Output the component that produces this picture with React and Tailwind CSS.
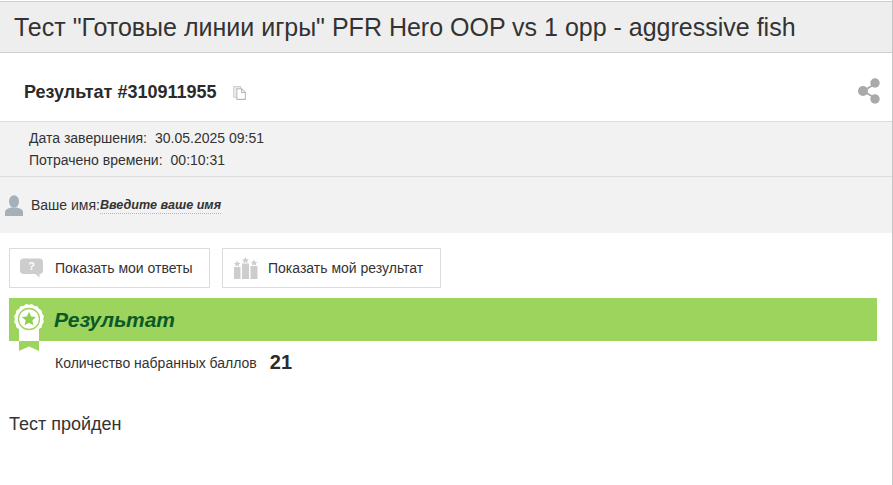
const font = { fontFamily: '"Liberation Sans", Arial, sans-serif' };

function CopyIcon() {
  return (
    <svg width="15" height="16" viewBox="0 0 14 15" className="ml-[15px] mt-[1px] shrink-0">
      <path d="M1.5 1.5H8V11.5H1.5Z" fill="#eeeeee" stroke="#d9d0c8" />
      <path d="M4.5 3.5H9L12.5 7V13.5H4.5Z" fill="#fff" stroke="#b9b9b9" />
      <path d="M9 3.5V7H12.5" fill="none" stroke="#b9b9b9" />
    </svg>
  );
}

function ShareIcon() {
  return (
    <svg width="24" height="28" viewBox="0 0 24 28" className="block">
      <path d="M6 14L18 7M6 14L18 21" stroke="#a9a9a9" strokeWidth="2" />
      <circle cx="6" cy="14" r="5" fill="#a9a9a9" />
      <circle cx="18" cy="6" r="4.7" fill="#a9a9a9" />
      <circle cx="18" cy="22" r="4.7" fill="#a9a9a9" />
    </svg>
  );
}

function UserIcon() {
  return (
    <svg width="18" height="22" viewBox="0 0 18 22" className="block shrink-0">
      <ellipse cx="9" cy="6.5" rx="5" ry="6.2" fill="#a5b0b9" />
      <path d="M0 21V17.5C0 14.5 3 13.5 6 12.5H12C15 13.5 18 14.5 18 17.5V21Z" fill="#a5b0b9" />
    </svg>
  );
}

function QuestionIcon() {
  return (
    <svg width="24" height="20" viewBox="0 0 24 20" className="block shrink-0">
      <path d="M4 0.5H19C22 0.5 23 2 23 4V12C23 14.5 22 16 19.5 16V19.5L15.5 16H4C1 16 0 14.5 0 12V4C0 2 1 0.5 4 0.5Z" fill="#cdcdcd" />
      <text x="11.5" y="12" textAnchor="middle" fontSize="11" fontWeight="700" fill="#fff" fontFamily="Liberation Sans">?</text>
    </svg>
  );
}

function PodiumIcon() {
  return (
    <svg width="24" height="22" viewBox="0 0 24 22" className="block shrink-0">
      <rect x="0" y="10" width="6.5" height="12" fill="#cdcdcd" />
      <rect x="8" y="6.5" width="7" height="15.5" fill="#cdcdcd" />
      <rect x="16.5" y="9" width="7" height="13" fill="#cdcdcd" />
      <path d="M3.2 3.5L4.2 5.7L6.5 6L4.8 7.5L5.3 9.5L3.2 8.4L1.1 9.5L1.6 7.5L0 6L2.2 5.7Z" fill="#cdcdcd" />
      <path d="M11.5 0L12.6 2.2L15 2.5L13.2 4.1L13.7 6.2L11.5 5.1L9.3 6.2L9.8 4.1L8 2.5L10.4 2.2Z" fill="#cdcdcd" />
      <path d="M20 2.5L21 4.7L23.4 5L21.7 6.5L22.2 8.5L20 7.4L17.9 8.5L18.4 6.5L16.7 5L19 4.7Z" fill="#cdcdcd" />
    </svg>
  );
}

function Badge() {
  const n = 16;
  let d = "";
  for (let i = 0; i < n * 2; i++) {
    const a = (Math.PI * i) / n;
    const r = i % 2 ? 15.2 : 14.2;
    d += `${i ? "L" : "M"}${(15 + r * Math.sin(a)).toFixed(2)} ${(15 - r * Math.cos(a)).toFixed(2)}`;
  }
  d += "Z";
  return (
    <svg width="30" height="48" viewBox="0 0 30 48" className="absolute left-[4.5px] top-[6px]">
      <path d="M5 22V47L15 42.5L25 47V22Z" fill="#9cd45e" />
      <path d="M5 22V37H25V22Z" fill="#fff" />
      <path d={d} fill="#fff" />
      <circle cx="15" cy="15" r="10.5" fill="#fff" stroke="#9cd45e" strokeWidth="1.3" />
      <path d="M15 7.8L17.1 12.4L22.1 13L18.4 16.3L19.4 21.2L15 18.8L10.6 21.2L11.6 16.3L7.9 13L12.9 12.4Z" fill="#8fd04f" />
    </svg>
  );
}

export default function App() {
  return (
    <div className="w-[893px] h-[485px] overflow-hidden bg-white text-[#333] border-r border-[#c4c4c4]" style={font}>
      <div className="h-[52px] mt-px bg-[#eeeeee] border-y border-[#cfcfcf] pl-[14px] flex items-center">
        <h1 className="text-[25px] leading-none text-[#333] whitespace-nowrap">Тест "Готовые линии игры" PFR Hero OOP vs 1 opp - aggressive fish</h1>
      </div>
      <div className="h-[69px] flex items-center pl-[24px] pr-[11px] pt-[10px] border-b border-[#dcdcdc]">
        <span className="text-[18px] leading-none font-bold text-[#2b2b2b]">Результат #310911955</span>
        <CopyIcon />
        <span className="ml-auto -mt-[2px]"><ShareIcon /></span>
      </div>
      <div className="h-[55px] bg-[#f2f2f2] border-b border-[#dcdcdc] pl-[29px] pt-[5px] text-[14px] leading-[22px]">
        <div className="flex"><span>Дата завершения:</span><span className="ml-[8px]">30.05.2025 09:51</span></div>
        <div className="flex"><span>Потрачено времени:</span><span className="ml-[8px]">00:10:31</span></div>
      </div>
      <div className="h-[56px] bg-[#f2f2f2] flex items-center pl-[5px] pt-[1px] text-[14px]">
        <UserIcon />
        <span className="ml-[8px]">Ваше имя:</span>
        <span className="italic font-bold text-[12.6px] border-b border-dotted border-[#b5b5b5] leading-[16px]">Введите ваше имя</span>
      </div>
      <div className="flex gap-[12px] pl-[9px] mt-[15px]">
        <div className="h-[40px] w-[201px] border border-[#dcdcdc] flex items-center pl-[10px] text-[14px]">
          <QuestionIcon />
          <span className="ml-[11px]">Показать мои ответы</span>
        </div>
        <div className="h-[40px] w-[219px] border border-[#dcdcdc] flex items-center pl-[11px] text-[14px]">
          <PodiumIcon />
          <span className="ml-[10px]">Показать мой результат</span>
        </div>
      </div>
      <div className="relative mt-[10px] ml-[9px] w-[868px] h-[43px] bg-[#9cd45e] flex items-center pl-[45px]">
        <Badge />
        <span className="text-[21px] font-bold italic text-[#0a5a28]">Результат</span>
      </div>
      <div className="flex items-center pl-[55px] h-[42px] pt-[3px] text-[14px]">
        <span>Количество набранных баллов</span>
        <span className="ml-[13px] text-[20px] font-bold text-[#2b2b2b] -mt-[3px]">21</span>
      </div>
      <div className="pl-[9px] mt-[29px] text-[18px] leading-[24px]">Тест пройден</div>
    </div>
  );
}
